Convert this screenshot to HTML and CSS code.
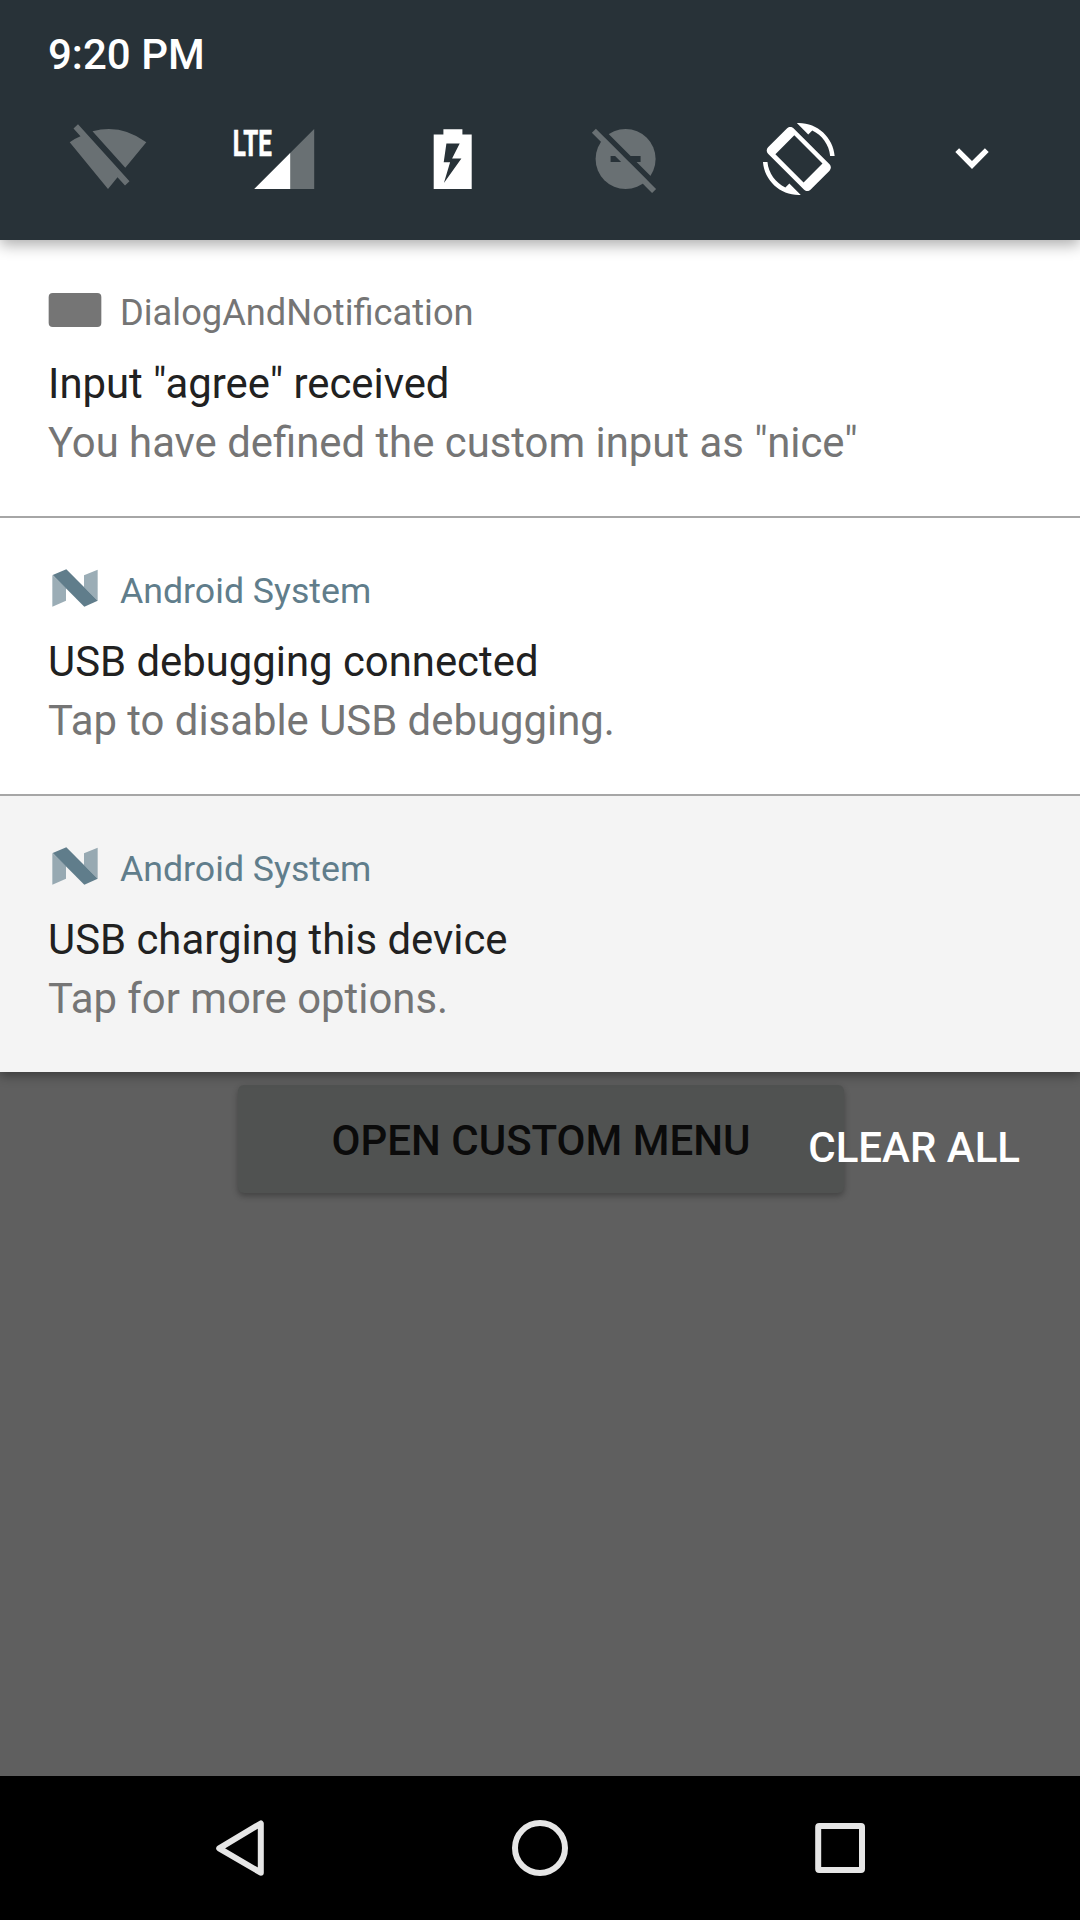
FILE: index.html
```html
<!DOCTYPE html>
<html lang="en">
<head>
<meta charset="utf-8">
<title>Notifications</title>
<link rel="stylesheet" href="styles.css">
</head>
<body>
<div class="screen">
  <header class="quick-panel">
    <div class="clock">9:20 PM</div>
    <div class="toggles">
      <svg class="toggle" viewBox="36 111 144 96"><path class="dim" d="M78 124.3L129.5 181.3L125 185.5L117.5 177.3L108 189L69.7 142.3Q74.5 138.7 80.5 136.3L73.5 128.6ZM92.5 131.3Q121 123.500 146.300 142.300L125.300 167.700Z"/></svg>
      <svg class="toggle" viewBox="208.8 111 144 96"><path class="dim" d="M314 129V189H289V154Z"/><path class="lit" d="M254 189L290 153V189Z"/><text class="lte" x="232.600" y="156" textLength="39" lengthAdjust="spacingAndGlyphs">LTE</text></svg>
      <svg class="toggle" viewBox="381.6 111 144 96"><path class="lit" fill-rule="evenodd" d="M433.300 134.500H443V129.200H462V134.500H471.300V189H433.300ZM446 143.500L443.300 162.300H449.700L443.500 183L461 158.500H451.700L459.300 143.500Z"/></svg>
      <svg class="toggle" viewBox="554.4 111 144 96"><circle class="dim" cx="626" cy="159" r="30"/><path class="cut" d="M611 156H641V162H611ZM594 127L602 127L660 185V193Z"/><path class="dim" d="M592.300 132.700L596.300 128.700L656.500 188.900L652.500 192.900Z"/></svg>
      <svg class="toggle" viewBox="727.2 111 144 96"><path class="lit" fill-rule="evenodd" transform="translate(763 123) scale(3)" d="M16.480 2.520c3.270 1.550 5.610 4.720 5.970 8.480h1.500C23.440 4.840 18.290 0 12 0l-.66.03 3.810 3.810 1.330-1.320zm-6.250-.77c-.59-.59-1.540-.59-2.120 0L1.750 8.110c-.59.59-.59 1.540 0 2.120l12.020 12.020c.59.59 1.540.59 2.120 0l6.360-6.360c.59-.59.59-1.540 0-2.120L10.230 1.750zM13.600 19.800L4.200 10.400L10.500 4.100L19.900 13.500zM7.520 21.480C4.250 19.940 1.910 16.760 1.550 13H.05C.56 19.160 5.710 24 12 24l.66-.03-3.810-3.810-1.330 1.320z"/></svg>
      <svg class="toggle" viewBox="900 111 144 96"><path class="lit" d="M955.300 152L959.100 148.200L972 161.100L984.900 148.200L988.700 152L972 168.900Z"/></svg>
    </div>
  </header>

  <main class="notifications">
    <article class="card">
      <div class="app app-grey"><svg class="app-icon" viewBox="144 66 216 126"><rect x="146" y="69" width="158" height="102" rx="12"/></svg><span>DialogAndNotification</span></div>
      <h2 class="title">Input "agree" received</h2>
      <p class="detail">You have defined the custom input as "nice"</p>
    </article>
    <article class="card">
      <div class="app"><svg class="app-icon" viewBox="144 60 216 126"><path class="fold" d="M157 75L198 114V152L157 170ZM252 76L293 59V152L252 112Z"/><path d="M158 75L199 58L293 152L253 170Z"/></svg><span>Android System</span></div>
      <h2 class="title">USB debugging connected</h2>
      <p class="detail">Tap to disable USB debugging.</p>
    </article>
    <article class="card card-low">
      <div class="app"><svg class="app-icon" viewBox="144 60 216 126"><path class="fold" d="M157 75L198 114V152L157 170ZM252 76L293 59V152L252 112Z"/><path d="M158 75L199 58L293 152L253 170Z"/></svg><span>Android System</span></div>
      <h2 class="title">USB charging this device</h2>
      <p class="detail">Tap for more options.</p>
    </article>
  </main>

  <section class="backdrop">
    <div class="menu-button">OPEN CUSTOM MENU</div>
    <div class="clear-all">CLEAR ALL</div>
  </section>

  <nav class="nav-bar">
    <svg class="nav-key" viewBox="90 1776 300 144"><path d="M219.200 1848.300L260.800 1823.500V1872.700Z"/></svg>
    <svg class="nav-key" viewBox="390 1776 300 144"><circle cx="540" cy="1848" r="25"/></svg>
    <svg class="nav-key" viewBox="690 1776 300 144"><rect x="818.200" y="1826.100" width="43.800" height="43.800" rx="1"/></svg>
  </nav>
</div>
</body>
</html>
```
FILE: styles.css
```css
* { box-sizing: border-box; }

body {
  margin: 0;
  background: #5f5f5f;
  font-family: Roboto, "Liberation Sans", sans-serif;
  font-size: 42px;
}

.screen {
  display: flex;
  flex-direction: column;
  width: 1080px;
  height: 1920px;
  overflow: hidden;
}

.quick-panel {
  position: relative;
  z-index: 2;
  height: 240px;
  padding: 30px 36px 0;
  background: #283238;
  box-shadow: 0 5px 14px rgba(0, 0, 0, .32);
}

.clock {
  height: 81px;
  padding-left: 12px;
  color: #fff;
  font-weight: 500;
  line-height: 49px;
}

.toggles { display: flex; justify-content: space-between; }
.toggle { width: 144px; height: 96px; }
.dim { fill: #697073; }
.lit { fill: #fff; }
.cut { fill: #283238; }
.lte {
  fill: #fff;
  stroke: #fff;
  stroke-width: .6px;
  font-size: 36px;
  font-weight: 700;
}

.notifications {
  position: relative;
  z-index: 1;
  display: flex;
  flex-direction: column;
  gap: 2px;
  background: #a6a6a6;
  box-shadow: 0 4px 10px rgba(0, 0, 0, .36);
}

.card {
  height: 276px;
  padding: 52px 48px 0;
  background: #fff;
}
.card-low { background: #f4f4f4; }

.app {
  display: flex;
  height: 42px;
  margin-bottom: 20px;
  color: #607d8b;
  font-size: 35.7px;
  line-height: 42px;
}
.app-grey {
  color: #757575;
  font-size: 36.25px;
}
.app-icon {
  width: 72px;
  height: 42px;
  fill: currentColor;
  overflow: visible;
}
.fold { opacity: .63; }

.title, .detail {
  margin: 0;
  font-size: 41.85px;
  font-weight: 400;
  line-height: 59px;
}
.title { color: #212121; }
.detail { color: #757575; }

.backdrop {
  position: relative;
  flex: 1;
  padding: 13px 236px 0 238px;
}

.menu-button {
  height: 108px;
  border-radius: 6px;
  background: #505251;
  box-shadow: 0 3px 6px rgba(0, 0, 0, .3);
  color: #0b0b0b;
  font-weight: 500;
  line-height: 111px;
  text-align: center;
}

.clear-all {
  position: absolute;
  top: 51px;
  right: 60px;
  color: #fff;
  font-weight: 500;
  line-height: 49px;
}

.nav-bar {
  display: flex;
  justify-content: center;
  height: 144px;
  background: #000;
}
.nav-key {
  width: 300px;
  height: 144px;
  fill: none;
  stroke: #e6e6e6;
  stroke-width: 6px;
  stroke-linejoin: round;
}
```
